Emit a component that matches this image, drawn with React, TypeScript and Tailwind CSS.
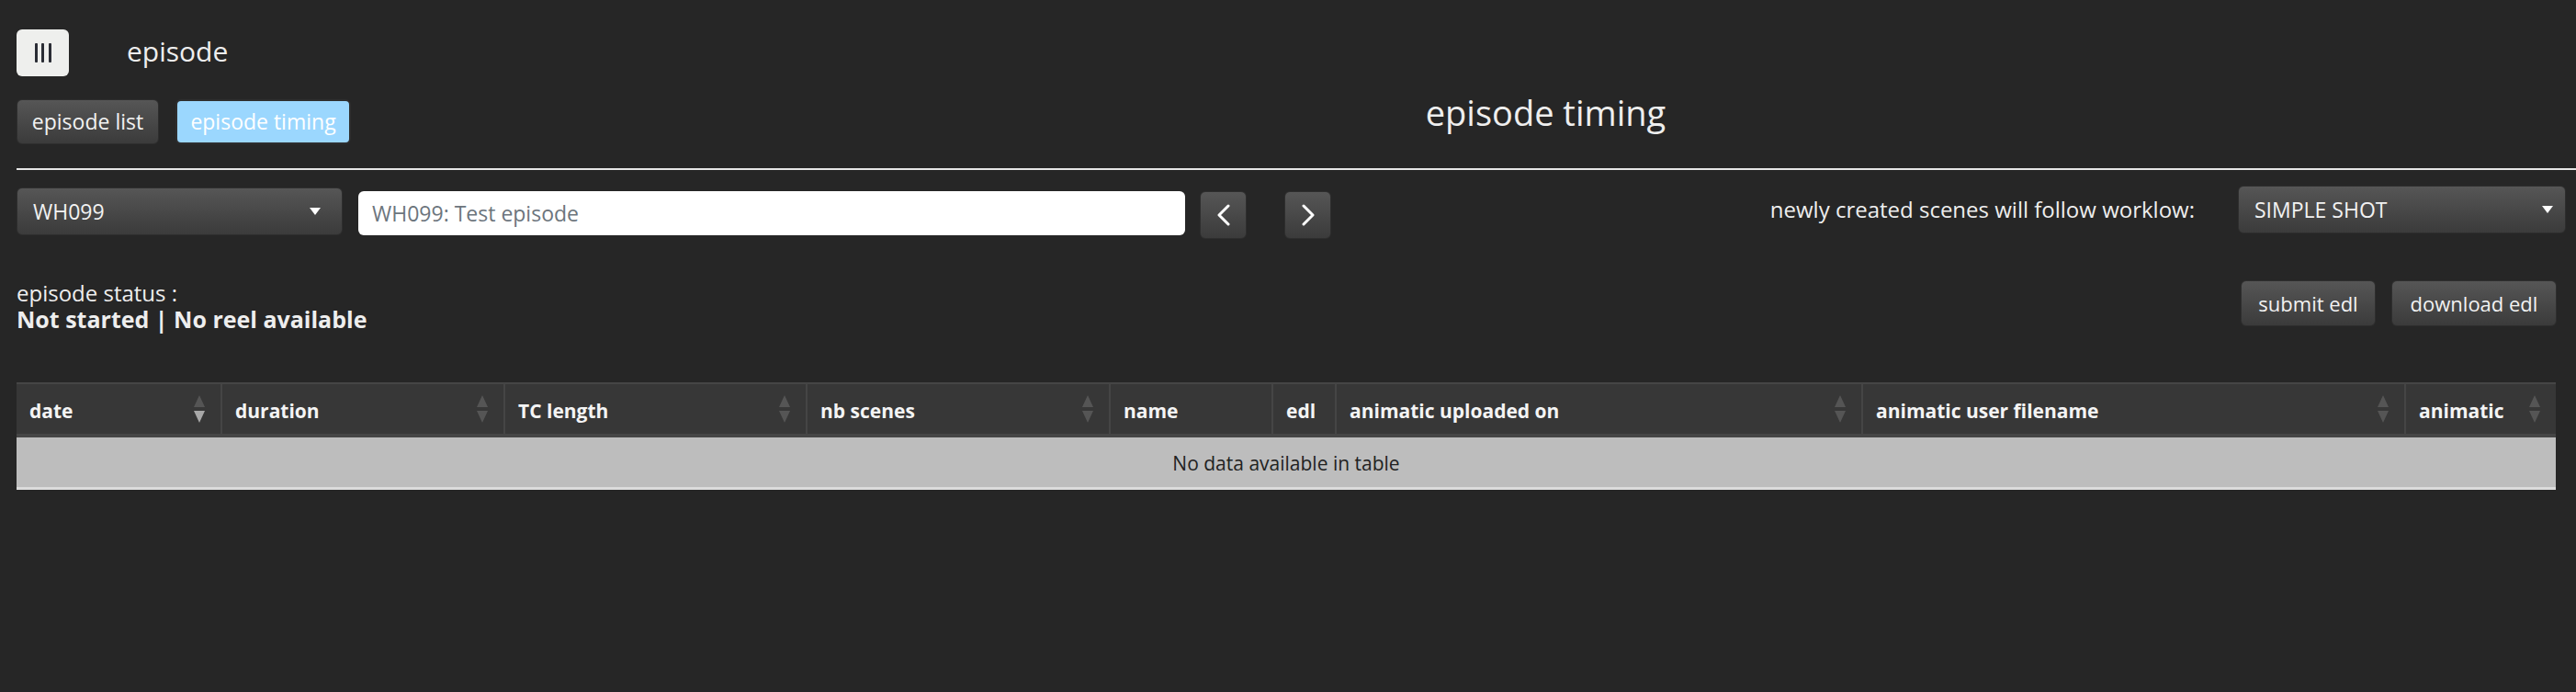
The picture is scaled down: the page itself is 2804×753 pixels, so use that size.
import React from "react";

const cols: { label: string; w: number; sort: boolean; active?: boolean }[] = [
  { label: "date", w: 224, sort: true, active: true },
  { label: "duration", w: 308, sort: true },
  { label: "TC length", w: 329, sort: true },
  { label: "nb scenes", w: 330, sort: true },
  { label: "name", w: 177, sort: false },
  { label: "edl", w: 69, sort: false },
  { label: "animatic uploaded on", w: 573, sort: true },
  { label: "animatic user filename", w: 591, sort: true },
  { label: "animatic", w: 163, sort: true },
];

function SortIcon({ active }: { active?: boolean }) {
  return (
    <svg width="14" height="32" viewBox="0 0 14 32" className="shrink-0">
      <polygon points="7,1 13,14 1,14" fill="#555555" />
      <polygon points="1,18 13,18 7,31" fill={active ? "#a8a8a8" : "#555555"} />
    </svg>
  );
}

function Caret() {
  return (
    <svg width="14" height="10" viewBox="0 0 14 10">
      <polygon points="1,1 13,1 7,9" fill="#ffffff" />
    </svg>
  );
}

const btn =
  "rounded-[6px] border border-[#2e2e2e] bg-gradient-to-b from-[#565656] to-[#3b3b3b] text-[#f2f2f2]";

export default function App() {
  return (
    <div
      className="min-h-[753px] w-full bg-[#262626] text-[#eeeeee]"
      style={{ fontFamily: '"Open Sans", "Noto Sans", sans-serif' }}
    >
      {/* top header */}
      <div className="flex items-center pl-[18px] pt-[32px]">
        <button className="flex h-[51px] w-[57px] items-center justify-center gap-[4.5px] rounded-[6px] bg-[#eeefed]">
          <span className="h-[21px] w-[3px] rounded-[1px] bg-[#2a2d35]" />
          <span className="h-[21px] w-[3px] rounded-[1px] bg-[#2a2d35]" />
          <span className="h-[21px] w-[3px] rounded-[1px] bg-[#2a2d35]" />
        </button>
        <div className="ml-[63px] -mt-[4px] text-[30px] leading-none text-[#eeeeee]">episode</div>
      </div>

      {/* tabs + title */}
      <div className="mt-[25px] flex items-start">
        <div className="flex w-[561px] shrink-0 gap-[18px] pl-[18px]">
          <button className={`${btn} h-[49px] w-[155px] text-[23px] leading-none`}>episode list</button>
          <button className="h-[49px] w-[191px] rounded-[6px] border-2 border-[#2e2e2e] bg-[#9bd7fe] text-[23px] leading-none text-white">
            episode timing
          </button>
        </div>
        <div className="-mt-[10px] flex-1 text-center text-[38px] leading-[49px] text-[#eeeeee]">episode timing</div>
      </div>

      {/* divider */}
      <div className="ml-[18px] mt-[26px] h-[2px] bg-[#e6e6e6]" />

      {/* controls row */}
      <div className="mt-[17px] flex items-start pl-[18px] pr-[11px]">
        <div
          className={`${btn} mt-[2px] flex h-[52px] w-[355px] items-center justify-between pl-[17px] pr-[22px] text-[23px]`}
        >
          <span>WH099</span>
          <Caret />
        </div>
        <div className="ml-[17px] mt-[6px] flex h-[48px] w-[900px] items-center rounded-[6px] bg-white pl-[15px] text-[23px] text-[#6c757d]">
          WH099: Test episode
        </div>
        <button className={`${btn} ml-[16px] mt-[6px] flex h-[52px] w-[51px] items-center justify-center`}>
          <svg width="16" height="24" viewBox="0 0 16 24">
            <polyline points="13,2 3,12 13,22" fill="none" stroke="#fff" strokeWidth="3" strokeLinecap="round" strokeLinejoin="round" />
          </svg>
        </button>
        <button className={`${btn} ml-[41px] mt-[6px] flex h-[52px] w-[51px] items-center justify-center`}>
          <svg width="16" height="24" viewBox="0 0 16 24">
            <polyline points="3,2 13,12 3,22" fill="none" stroke="#fff" strokeWidth="3" strokeLinecap="round" strokeLinejoin="round" />
          </svg>
        </button>
        <div className="flex-1" />
        <div className="mr-[47px] flex h-[52px] items-center text-[24px] text-[#eeeeee]">
          newly created scenes will follow worklow:
        </div>
        <div
          className={`${btn} flex h-[52px] w-[357px] items-center justify-between pl-[17px] pr-[12px] text-[23px]`}
        >
          <span>SIMPLE SHOT</span>
          <Caret />
        </div>
      </div>

      {/* status row */}
      <div className="mt-[45px] flex items-start pl-[18px] pr-[21px]">
        <div className="flex-1 leading-[28px]">
          <div className="text-[24px] text-[#eeeeee]">episode status :</div>
          <div className="text-[25px] font-bold text-[#eeeeee]">Not started | No reel available</div>
        </div>
        <button className={`${btn} h-[50px] w-[147px] text-[22px] leading-none`}>submit edl</button>
        <button className={`${btn} ml-[17px] h-[50px] w-[180px] text-[22px] leading-none`}>download edl</button>
      </div>

      {/* table */}
      <div className="ml-[18px] mt-[55px] w-[2764px]">
        <div className="flex border-t-2 border-b-4 border-[#454545] bg-[#373737]">
          {cols.map((c, i) => (
            <div
              key={c.label}
              style={{ width: c.w }}
              className={`flex h-[54px] shrink-0 items-center justify-between pl-[14px] pr-[16px] pt-[5px] text-[21px] font-bold text-[#f4f4f4] ${
                i < cols.length - 1 ? "border-r-2 border-[#454545]" : ""
              }`}
            >
              <span className="whitespace-nowrap">{c.label}</span>
              {c.sort && (
                <span className="-mt-[5px]">
                  <SortIcon active={c.active} />
                </span>
              )}
            </div>
          ))}
        </div>
        <div className="flex h-[54px] items-center justify-center bg-[#bdbdbd] pt-[4px] text-[21px] text-[#222222]">
          No data available in table
        </div>
        <div className="h-[3px] bg-[#dcdcdc]" />
      </div>
    </div>
  );
}
